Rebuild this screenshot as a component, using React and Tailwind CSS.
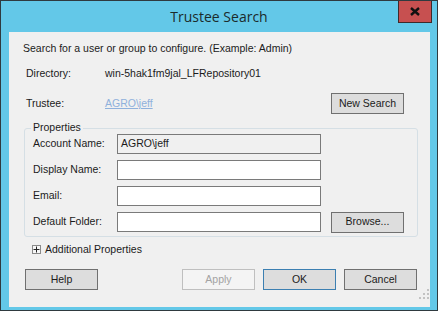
const FONT = { fontFamily: '"Liberation Sans", Arial, sans-serif' }

function WinButton({ children, className = '', variant = 'normal' }) {
  const styles = {
    normal: 'border-[#707070] bg-[#dddddd] text-[#1b1b1b]',
    default: 'border-[#3c7fb1] bg-[#dddddd] text-[#1b1b1b]',
    disabled: 'border-[#bfbfbf] bg-[#f4f4f4] text-[#a3a3a3]',
  }
  return (
    <div
      className={`w-[73px] h-[21px] border flex items-center justify-center text-[10.5px] ${styles[variant]} ${className}`}
    >
      {children}
    </div>
  )
}

function FieldRow({ label, value, readOnly, children }) {
  return (
    <div className="flex items-center h-[20px]">
      <span className="w-[92px] pl-[8px] whitespace-nowrap text-[10.5px] text-[#1b1b1b]">{label}</span>
      <div
        className={`w-[204px] h-[20px] border border-[#7a7a7a] flex items-center px-[3px] text-[10.5px] text-[#1b1b1b] ${
          readOnly ? 'bg-[#f0f0f0]' : 'bg-white'
        }`}
      >
        {value}
      </div>
      {children}
    </div>
  )
}

export default function App() {
  return (
    <div className="w-[438px] h-[311px] bg-white" style={FONT}>
      <div className="w-[438px] h-[311px] border border-[#2f3a3f] bg-[#63c8e8] flex flex-col">
        {/* Title bar */}
        <div className="relative h-[31px] shrink-0 flex items-center justify-center">
          <span
            className="text-[14px] text-[#1b2b2b]"
            style={{ fontFamily: '"Open Sans", "Noto Sans", sans-serif' }}
          >
            Trustee Search
          </span>
          <div className="absolute right-[5px] top-0 w-[34px] h-[22px] bg-[#c75050] border border-[#3f2a2a] border-t-0 flex items-center justify-center">
            <svg width="10" height="9" viewBox="0 0 10 9">
              <path d="M1 1 L9 8 M9 1 L1 8" stroke="#111" strokeWidth="2.4" />
            </svg>
          </div>
        </div>

        {/* Client area */}
        <div className="relative ml-[8px] mr-[7px] mb-[3px] flex-1 bg-[#f0f0f0] flex flex-col">
          <p className="mt-[10px] ml-[14px] text-[10.5px] text-[#1b1b1b] leading-[13px]">
            Search for a user or group to configure. (Example: Admin)
          </p>

          <div className="mt-[12px] ml-[17px] flex text-[10.5px] text-[#1b1b1b] leading-[13px]">
            <span className="w-[79px]">Directory:</span>
            <span>win-5hak1fm9jal_LFRepository01</span>
          </div>

          <div className="mt-[13px] flex items-center h-[21px]">
            <span className="ml-[17px] w-[79px] text-[10.5px] text-[#1b1b1b]">Trustee:</span>
            <span className="text-[10.5px] text-[#8fb1dc] underline">AGRO\jeff</span>
            <WinButton className="ml-auto mr-[26px]">New Search</WinButton>
          </div>

          {/* Properties group */}
          <div className="relative mt-[14px] ml-[15px] w-[394px] h-[109px] border border-[#d5dfe5] rounded-[3px]">
            <span className="absolute -top-[8px] left-[6px] px-[2px] bg-[#f0f0f0] text-[10.5px] text-[#1b1b1b] leading-[13px]">
              Properties
            </span>
            <div className="mt-[5px] flex flex-col gap-[6px]">
              <FieldRow label="Account Name:" value="AGRO\jeff" readOnly />
              <FieldRow label="Display Name:" />
              <FieldRow label="Email:" />
              <FieldRow label="Default Folder:">
                <WinButton className="ml-[10px]">Browse...</WinButton>
              </FieldRow>
            </div>
          </div>

          <div className="mt-[6px] ml-[23px] flex items-center gap-[4px] h-[13px]">
            <div className="w-[9px] h-[9px] border border-[#8a8a8a] bg-[#f7f7f7] flex items-center justify-center">
              <svg width="7" height="7" viewBox="0 0 7 7">
                <path d="M0.5 3.5 H6.5 M3.5 0.5 V6.5" stroke="#222" strokeWidth="1" />
              </svg>
            </div>
            <span className="text-[10.5px] text-[#1b1b1b]">Additional Properties</span>
          </div>

          <div className="mt-[13px] flex">
            <WinButton className="ml-[16px]">Help</WinButton>
            <WinButton variant="disabled" className="ml-[84px]">Apply</WinButton>
            <WinButton variant="default" className="ml-[8px]">OK</WinButton>
            <WinButton className="ml-[8px]">Cancel</WinButton>
          </div>

          {/* size grip */}
          <svg className="absolute right-[1px] bottom-[8px]" width="10" height="10" viewBox="0 0 10 10">
            {[[8, 0], [8, 4], [4, 4], [8, 8], [4, 8], [0, 8]].map(([x, y]) => (
              <rect key={`${x}-${y}`} x={x} y={y} width="2" height="2" fill="#c2c2c2" />
            ))}
          </svg>
        </div>
      </div>
    </div>
  )
}
